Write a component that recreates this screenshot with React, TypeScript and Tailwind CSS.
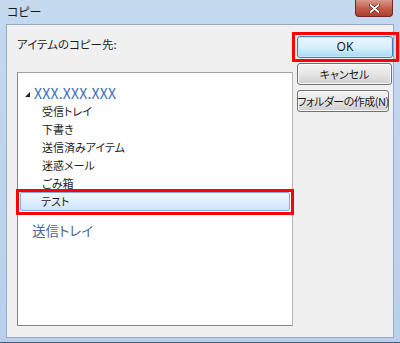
import React from "react";

const font = { fontFamily: '"Noto Sans CJK JP", "Noto Sans", sans-serif' };

function Button({ label, primary, className = "" }: { label: string; primary?: boolean; className?: string }) {
  return (
    <div
      className={
        "h-[22px] flex items-center justify-center whitespace-nowrap rounded-[3px] border leading-none text-[#1a1a1a] " +
        (primary
          ? "border-[#3c7fb1] bg-linear-to-b from-[#eaf6fd] via-[#d9f0fc] to-[#a7d9f5] shadow-[inset_0_0_0_1px_#c9e8fa] "
          : "border-[#707070] bg-linear-to-b from-[#f2f2f2] via-[#e6e6e6] to-[#cfcfcf] shadow-[inset_0_0_0_1px_#fbfbfb] ") +
        className
      }
    >
      {label}
    </div>
  );
}

const folders = ["受信トレイ", "下書き", "送信済みアイテム", "迷惑メール", "ごみ箱"];

export default function App() {
  return (
    <div
      className="relative w-[400px] h-[343px] bg-linear-to-b from-[#c5d9ef] to-[#b9d0ea] border-b border-[#4a5d74] overflow-hidden [font-feature-settings:'palt']"
      style={font}
    >
      {/* title bar */}
      <div className="h-[24px] flex items-center pl-[7px] text-[12px] text-[#1b1b1b]">コピー</div>
      <div className="absolute top-0 right-[7px] w-[38px] h-[17px] rounded-b-[4px] border border-t-0 border-[#6e2a22] bg-linear-to-b from-[#d89a8e] via-[#c45e4c] to-[#ad3e2c] flex items-center justify-center">
        <svg width="11" height="9" viewBox="0 0 11 9">
          <path d="M1.5 1 L9.5 8 M9.5 1 L1.5 8" stroke="#5a1a12" strokeWidth="3.2" strokeLinecap="round" />
          <path d="M1.5 1 L9.5 8 M9.5 1 L1.5 8" stroke="#ffffff" strokeWidth="1.8" strokeLinecap="round" />
        </svg>
      </div>

      {/* client area */}
      <div className="ml-[6px] w-[388px] h-[314px] border border-[#97aac4] bg-[#f0f0f0] flex pl-[10px]">
        <div className="flex flex-col">
          <div className="mt-[11px] h-[16px] leading-[16px] text-[11.5px] text-[#1e1e1e]">アイテムのコピー先:</div>
          <div className="mt-[20px] w-[276px] h-[254px] border border-[#828790] border-r-[#b5b5b5] border-t-[#a0a0a0] bg-white pt-[11px] px-[2px]">
            <div className="h-[18px] flex items-center pl-[5px]">
              <svg width="5" height="5" viewBox="0 0 5 5" className="mt-[2px]">
                <polygon points="5,0 5,5 0,5" fill="#262626" />
              </svg>
              <span className="ml-[4px] text-[14px] leading-none text-[#3a6dbb] tracking-[0.2px]">XXX.XXX.XXX</span>
            </div>
            {folders.map((f) => (
              <div key={f} className="h-[18px] flex items-center pl-[22px] text-[11px] text-[#1e1e1e]">
                {f}
              </div>
            ))}
            <div className="relative h-[19px] flex items-center pl-[20px] rounded-[2px] border border-[#84acdd] bg-linear-to-b from-[#f1f7fe] to-[#cfe4fa] text-[11px] text-[#1e1e1e]">
              テスト
              <div className="absolute -left-[5px] -right-[5px] -top-[4px] -bottom-[5px] border-[3px] border-[#ff0000]" />
            </div>
            <div className="mt-[10px] h-[18px] flex items-center pl-[12px] text-[13.5px] text-[#46699e]">送信トレイ</div>
          </div>
        </div>

        <div className="ml-[4px] mt-[11px] flex flex-col">
          <div className="relative w-[96px]">
            <Button label="OK" primary className="text-[12px] font-['Noto_Sans',sans-serif]" />
            <div className="absolute -left-[5px] -right-[6px] -top-[4px] -bottom-[4px] border-[3px] border-[#ff0000]" />
          </div>
          <Button label="キャンセル" className="mt-[5px] w-[95px] text-[11px]" />
          <Button label="フォルダーの作成(N)" className="mt-[5px] w-[92px] text-[11px] tracking-[-0.5px]" />
        </div>
      </div>
    </div>
  );
}
